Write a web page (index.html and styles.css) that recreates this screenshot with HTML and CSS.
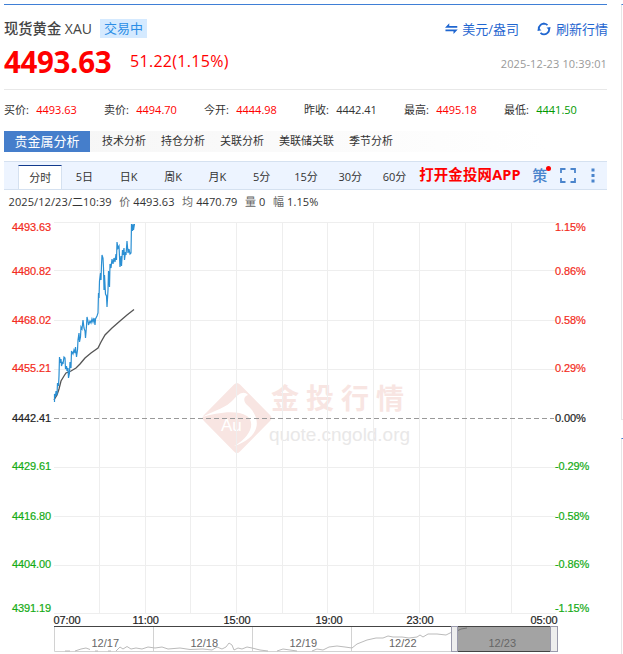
FILE: index.html
```
<!DOCTYPE html>
<html lang="zh-CN">
<head>
    <meta charset="UTF-8">
    <meta name="viewport" content="width=device-width, initial-scale=1.0">
    <title>现货黄金 XAU</title>
    <link rel="stylesheet" href="styles.css">
</head>
<body>
<div class="page">
    <div class="main">
        <div class="header">
            <div class="title-row">
                <div class="name"><span class="cn">现货黄金</span> <span class="code">XAU</span></div>
                <span class="status">交易中</span>
                <a class="unit">
                    <svg width="14" height="12" viewBox="0 0 14 12" fill="#1f66d0">
                        <path d="M0 4.600L4.500 0v2.800H13v1.800zM13.500 6.600L9 11.200V8.400H.5V6.600z"/>
                    </svg>
                    <span>美元/盎司</span>
                </a>
                <a class="refresh">
                    <svg width="14" height="14" viewBox="0 0 14 14">
                        <path d="M2 8.500A5.300 5.300 0 0 1 8.800 2M12 5.500A5.300 5.300 0 0 1 5.200 12M4 2.600A5.300 5.300 0 0 1 10.500 3.200M10 11.400A5.300 5.300 0 0 1 3.500 10.800" fill="none" stroke="#1f66d0" stroke-width="1.8"/>
                        <path d="M0 8.500L2 6l2.500 2.500zM14 5.500L12 8 9.500 5.500z" fill="#1f66d0"/>
                    </svg>
                    <span>刷新行情</span>
                </a>
            </div>
            <div class="price-row">
                <span class="price">4493.63</span>
                <span class="change">51.22(1.15%)</span>
                <span class="time">2025-12-23 10:39:01</span>
            </div>
        </div>

        <div class="quotes">
            <div>买价: <b class="up">4493.63</b></div>
            <div>卖价: <b class="up">4494.70</b></div>
            <div>今开: <b class="up">4444.98</b></div>
            <div>昨收: <b>4442.41</b></div>
            <div>最高: <b class="up">4495.18</b></div>
            <div>最低: <b class="down">4441.50</b></div>
        </div>

        <div class="analysis">
            <span class="analysis-title">贵金属分析</span>
            <a>技术分析</a>
            <a>持仓分析</a>
            <a>关联分析</a>
            <a>美联储关联</a>
            <a>季节分析</a>
        </div>

        <div class="tabs">
            <a class="active">分时</a>
            <a>5日</a>
            <a>日K</a>
            <a>周K</a>
            <a>月K</a>
            <a>5分</a>
            <a>15分</a>
            <a>30分</a>
            <a>60分</a>
            <span class="app">打开金投网APP</span>
            <span class="strategy">策<i class="dot"></i></span>
            <svg class="full" width="16" height="15" viewBox="0 0 16 15" fill="none" stroke="#4a84cc" stroke-width="1.8">
                <path d="M1 5V1h4.500M10.500 1H15v4M15 10v4h-4.500M5.500 14H1v-4"/>
            </svg>
            <svg class="more" width="4" height="15" viewBox="0 0 4 15" fill="#4a84cc">
                <path d="M.5 .5h3v3h-3zM.5 6h3v3h-3zM.5 11.5h3v3h-3z"/>
            </svg>
        </div>

        <div class="info">
            <span>2025/12/23/二10:39</span>
            <span><em>价</em> 4493.63</span>
            <span><em>均</em> 4470.79</span>
            <span><em>量</em> 0</span>
            <span><em>幅</em> 1.15%</span>
        </div>

        <svg class="chart" width="603" height="439" viewBox="4 215 603 439">
            <!-- watermark -->
            <g class="logo">
                <path d="M234 384.500q3-3 6 0L270 415q3 3 0 6l-30 30.500q-3 3-6 0L204 421q-3-3 0-6z" fill="#f8e5e2"/>
                <path d="M202 417C216 410 226 408 234 399C238 394 244 390 248 395C244 396 243 400 246 404C262 417 262 437 234 446C250 437 256 423 247 416C236 409 216 413 202 417z" fill="#fff"/>
                <text x="221" y="431" font-size="17" fill="#fff">Au</text>
                <text class="logo-cn" x="271" y="409">金投行情</text>
                <text x="269" y="441" font-size="19" fill="#e9e8e8" textLength="141">quote.cngold.org</text>
            </g>

            <path class="grid" d="M54 222.500H556M54 270.500H556M54 320.500H556M54 369.500H556M54 467.500H556M54 516.500H556M54 565.500H556M54 613.500H556"/>
            <path class="grid" d="M99.500 222V614M145.500 222V614M190.500 222V614M236.500 222V614M282.500 222V614M327.500 222V614M373.500 222V614M419.500 222V614M465.500 222V614M511.500 222V614"/>
            <path d="M54 418.500H554" stroke="#999" stroke-dasharray="5 3"/>

            <path class="avg" d="M54 400L57 395L59 389L61 381L64 376L66 373L71 371L76 368L80 364L85 358L91 353L98 348L101 342L105 335L112 328L120 321L127 315L134 309.500"/>
            <path class="line" d="M54.500 402V394L55.500 397L56 391L57 395L57.500 383L58.500 386L59 376L59.500 357L60.500 363L61 359L61.500 366L62.500 362L63 364L64 357L65 358L65.500 369L66.500 366L67 371L68 368L68.500 378L69.500 373L70 362L71 368L71.500 351L73 354L74 350L75 353L75.500 347L76.500 357L77.500 350L78 340L79 333L79.500 342L80.500 337L81 327L82 329L83 320L84 328L85 331L85.500 338L86.500 326L87 317L88 321L88.500 325L90 321L91 323L92 319L93 322L94 318L95 325L95.500 319L97 316L98 313L98.500 293L99 298L99.500 281L100.500 273L101 280L101.500 265L102 255L103 258L103.500 268L104 290L104.500 275L105.500 294L106.500 296L107 307L108 290L108.500 271L109.500 287L110 264L111 268L112 259L113 264L114 258L115 262L116 254L116.500 260L117 242L118 248L119 246L120 267L121 256L121.500 266L122.500 250L123 255L124 248L124.500 260L125.500 252L126 255L127 241L128 253L129 249L130 254L131 253L131.500 224L132.500 231L133 224L133.500 230L134.500 224"/>

            <g class="axis up-text">
                <text x="12" y="231">4493.63</text>
                <text x="12" y="275">4480.82</text>
                <text x="12" y="324">4468.02</text>
                <text x="12" y="372">4455.21</text>
                <text x="555" y="231">1.15%</text>
                <text x="555" y="275">0.86%</text>
                <text x="555" y="324">0.58%</text>
                <text x="555" y="372">0.29%</text>
            </g>
            <g class="axis">
                <text x="12" y="422">4442.41</text>
                <text x="555" y="422">0.00%</text>
            </g>
            <g class="axis down-text">
                <text x="12" y="470">4429.61</text>
                <text x="12" y="520">4416.80</text>
                <text x="12" y="568">4404.00</text>
                <text x="12" y="612">4391.19</text>
                <text x="555" y="470">-0.29%</text>
                <text x="555" y="520">-0.58%</text>
                <text x="555" y="568">-0.86%</text>
                <text x="555" y="612">-1.15%</text>
            </g>
            <g class="axis">
                <text x="53.500" y="624">07:00</text>
                <text x="132.500" y="624">11:00</text>
                <text x="223.500" y="624">15:00</text>
                <text x="315.500" y="624">19:00</text>
                <text x="406.500" y="624">23:00</text>
                <text x="530.500" y="624">05:00</text>
            </g>

            <!-- navigator -->
            <path d="M54.500 627V651.500H452M153.500 627V651M252.500 627V651M351.500 627V651" fill="none" stroke="#d2d2d2"/>
            <path class="nav-line" d="M65 651L70 651M75 651L81 649L86 648L90 649.500M95 651H98M108 651H111M116 651L120 647L123 649L127 646.500L131 649L136 648L142 649L148 647L155 648L162 647L168 649L180 648L190 649.500L203 649L212 650L217 647L222 649L226 647L229 643L232 645L234 650L238 648L242 649L247 647L252 648L260 650L268 651M277 651L283 649L290 650L297 651M312 651L317 649L323 650L329 647L337 646L345 647L352 648L357 644L362 642L367 640L376 638L383 638L388 636L393 637L402 637L409 638L417 637L420 635L423 637L428 634L437 634L446 635L452 632"/>
            <rect x="457" y="627" width="95" height="24.500" fill="#a3a3a3"/>
            <path d="M457 631L461 629L467 628" fill="none" stroke="#777"/>
            <path d="M54 626.500H557M457 651.500H552" stroke="#444"/>
            <g fill="#eee" stroke="#9a9aac">
                <rect x="451.500" y="626.500" width="6" height="25"/>
                <rect x="550.500" y="626.500" width="7" height="25"/>
            </g>
            <g class="days">
                <text x="91.500" y="647">12/17</text>
                <text x="190.500" y="647">12/18</text>
                <text x="289.500" y="647">12/19</text>
                <text x="389" y="647">12/22</text>
                <text x="488.500" y="647">12/23</text>
            </g>
        </svg>
    </div>
    <div class="side">
        <div class="side-box first"></div>
        <div class="side-box second"></div>
    </div>
</div>
</body>
</html>
```
FILE: styles.css
```
* {
    box-sizing: border-box;
    margin: 0;
    padding: 0;
}
body {
    font-family: "Open Sans", "Noto Sans CJK SC", sans-serif;
    font-size: 11px;
    color: #333;
    background-color: #fff;
    overflow: hidden;
}
.page {
    display: flex;
    height: 654px;
    padding: 4px 0 0 4px;
}
.main {
    width: 603px;
    flex: none;
    border-top: 1px solid #3f7fd6;
}
.side {
    flex: 1;
    margin-left: 14px;
}
.side-box {
    border-top: 1px solid #3f7fd6;
    border-left: 1px solid #e6e6e6;
}
.first {
    height: 416px;
    border-bottom: 1px solid #e6e6e6;
}
.second {
    height: 216px;
    margin-top: 18px;
}
.header {
    height: 85px;
    border-bottom: 1px solid #e8e8e8;
    padding-top: 13px;
}
.title-row {
    display: flex;
    height: 21px;
    align-items: center;
    font-size: 14px;
    line-height: 20px;
    white-space: nowrap;
}
.name {
    width: 96px;
    color: #444;
}
.cn {
    font-weight: 500;
    font-size: 14.3px;
}
.status {
    width: 47px;
    height: 19px;
    line-height: 18px;
    font-size: 13px;
    text-align: center;
    color: #2b8ee6;
    background-color: #d5eaff;
}
.unit, .refresh {
    display: flex;
    align-items: center;
    color: #1f66d0;
    font-size: 13px;
}
.unit {
    margin-left: auto;
    gap: 4px;
    width: 74px;
}
.refresh {
    gap: 5px;
    margin-left: 18px;
    margin-right: -1px;
}
.price-row {
    display: flex;
    align-items: center;
    height: 44px;
}
.price {
    width: 126px;
    font-size: 29.5px;
    font-weight: 700;
    color: #f00;
    letter-spacing: -0.35px;
}
.change {
    font-size: 16px;
    letter-spacing: 0.3px;
    color: #f00;
}
.time {
    margin-left: auto;
    font-size: 11px;
    letter-spacing: 0.13px;
    color: #999;
    padding-top: 5px;
}
.quotes {
    display: flex;
    height: 41px;
    line-height: 40px;
    white-space: nowrap;
}
.quotes div {
    width: 100px;
}
.quotes b {
    font-weight: 400;
    margin-left: 4.5px;
}
.up {
    color: #f00;
}
.down {
    color: #090;
}
.analysis {
    display: flex;
    height: 21px;
    line-height: 20px;
    gap: 15px;
    white-space: nowrap;
    background: linear-gradient(to right, #f5f5f5, #fff 90%);
}
.analysis-title {
    width: 86px;
    margin-right: -3px;
    text-align: center;
    font-size: 13px;
    color: #fff;
    background-color: #457ecb;
}
.tabs {
    display: flex;
    height: 29px;
    margin-top: 9px;
    padding-left: 14px;
    border-top: 1px solid #d5e1f0;
    border-bottom: 1px solid #d5e1f0;
    background-color: #edf4ff;
    line-height: 30px;
    white-space: nowrap;
}
.tabs a {
    width: 44.3px;
    text-align: center;
}
.tabs .active {
    height: 24px;
    margin-top: 3px;
    line-height: 24px;
    background-color: #fff;
    border: 1px solid #d5e1f0;
    border-top-color: #123a8c;
    border-bottom: 0;
}
.app {
    margin-left: 2.5px;
    width: 113px;
    line-height: 26px;
    font-size: 14.4px;
    letter-spacing: 0.2px;
    font-weight: 700;
    color: #f00;
}
.strategy {
    position: relative;
    width: 28px;
    line-height: 27px;
    font-size: 15px;
    font-weight: 500;
    color: #4a84cc;
}
.dot {
    position: absolute;
    left: 14px;
    top: 4px;
    width: 5px;
    height: 5px;
    border-radius: 50%;
    background-color: #f00;
}
.full {
    margin-top: 6px;
}
.more {
    margin: 6px 0 0 15px;
}
.info {
    display: flex;
    gap: 7.5px;
    height: 25px;
    padding-left: 4.5px;
    line-height: 24px;
    letter-spacing: 0.1px;
}
.info em {
    font-style: normal;
    color: #666;
}
.chart {
    display: block;
    font-family: "Liberation Sans", "Noto Sans CJK SC", sans-serif;
}
.grid {
    stroke: #eee;
    fill: none;
}
.line {
    stroke: #2a8fd3;
    stroke-width: 1.2;
    fill: none;
}
.avg {
    stroke: #555;
    stroke-width: 1.3;
    fill: none;
}
.axis {
    font-size: 11px;
    letter-spacing: -0.1px;
    fill: #222;
    stroke: #222;
    stroke-width: 0.2px;
}
.up-text {
    fill: #f32b20;
    stroke: #f32b20;
}
.down-text {
    fill: #15ab15;
    stroke: #15ab15;
}
.days {
    font-size: 11px;
    fill: #666;
}
.nav-line {
    stroke: #bbb;
    fill: none;
}
.logo-cn {
    font-size: 28px;
    font-weight: 700;
    letter-spacing: 7px;
    fill: #f8e5e2;
}
```
